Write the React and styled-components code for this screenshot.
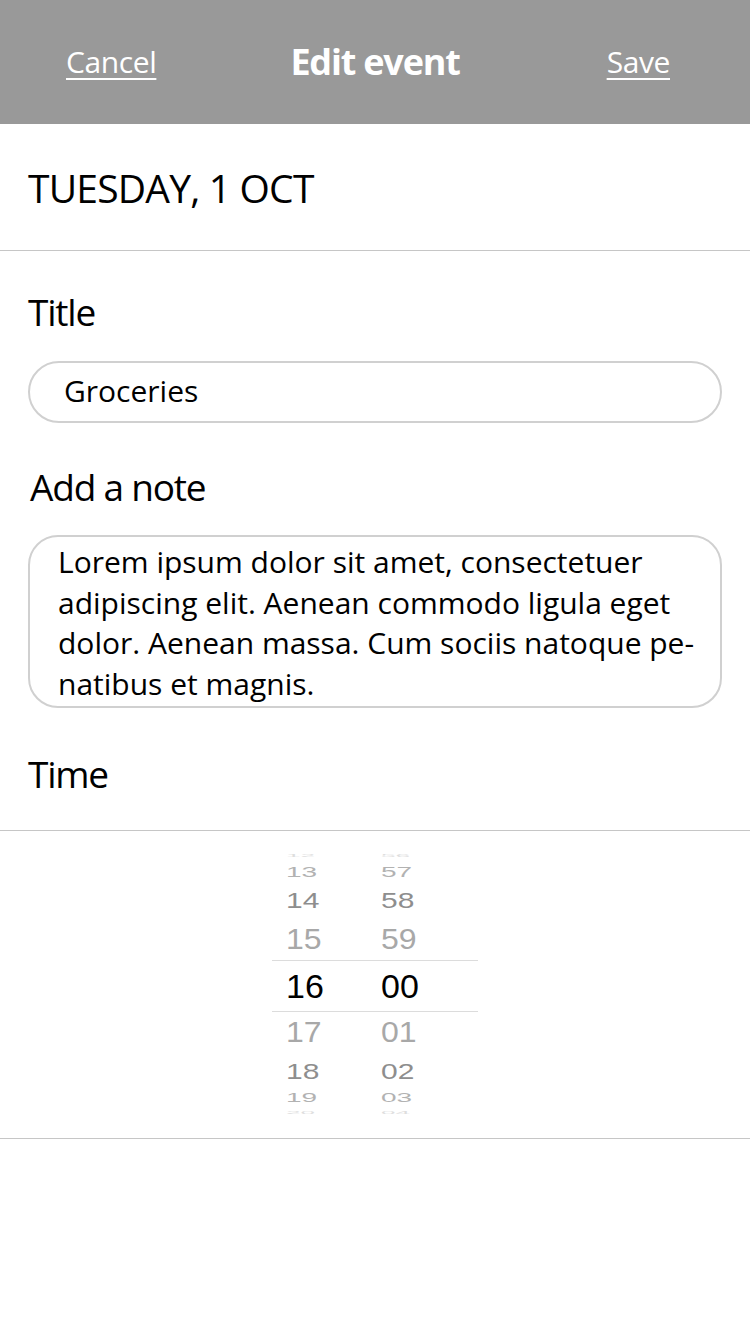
import React from 'react'
import styled, { createGlobalStyle } from 'styled-components'

const GlobalStyle = createGlobalStyle`
  body {
    margin: 0;
    background: #fff;
    font-family: "Open Sans", "Noto Sans", sans-serif;
    color: #000;
  }
`;

const Page = styled.div`
  width: 750px;
  min-height: 1334px;
  background: #fff;
`;

const Header = styled.header`
  height: 124px;
  background: #999999;
  display: grid;
  grid-template-columns: 1fr auto 1fr;
  align-items: center;
  color: #fff;
`;

const HeaderLink = styled.a`
  justify-self: ${p => (p.$end ? 'end' : 'start')};
  padding: ${p => (p.$end ? '0 80px 2px 0' : '0 0 2px 66px')};
  font-size: 30px;
  letter-spacing: -0.4px;
  text-decoration: underline;
  text-decoration-thickness: 2px;
  text-underline-offset: 5px;
  cursor: pointer;
`;

const HeaderTitle = styled.h1`
  margin: 0 0 2px;
  font-size: 36px;
  font-weight: 700;
  letter-spacing: -1.2px;
`;

const DateRow = styled.div`
  height: 127px;
  box-sizing: border-box;
  border-bottom: 1px solid #c6c6c6;
  display: flex;
  align-items: center;
  padding-left: 28px;
  font-size: 39px;
  letter-spacing: -0.8px;
`;

const Form = styled.div`
  display: flex;
  flex-direction: column;
  padding: 41px 28px 36px;
  border-bottom: 1px solid #c6c6c6;
`;

const Label = styled.div`
  font-size: 37px;
  line-height: 40px;
  letter-spacing: -1.2px;
  margin: ${p => p.$gap || 0}px 0 0 ${p => p.$indent || 0}px;
`;

const Input = styled.div`
  margin-top: 29px;
  height: 62px;
  box-sizing: border-box;
  border: 2px solid #d0d0d0;
  border-radius: 31px;
  display: flex;
  align-items: center;
  padding: 0 0 4px 34px;
  font-size: 30px;
`;

const Note = styled.div`
  margin-top: 28px;
  height: 173px;
  box-sizing: border-box;
  border: 2px solid #d0d0d0;
  border-radius: 30px;
  padding: 5px 20px 2px 28px;
  font-size: 30px;
  line-height: 40.5px;
  white-space: nowrap;
`;

const Picker = styled.div`
  padding: 19px 0 18px;
  border-bottom: 1px solid #c6c6c6;
  display: flex;
  justify-content: center;
`;

const Wheel = styled.div`
  width: 206px;
  display: flex;
  flex-direction: column;
  font-family: "Liberation Sans", Arial, sans-serif;
`;

const WheelRow = styled.div`
  height: ${p => p.$h}px;
  box-sizing: border-box;
  display: flex;
  align-items: center;
  padding-left: 14px;
  border-top: ${p => (p.$active ? '1px solid #dcdcdc' : 'none')};
  border-bottom: ${p => (p.$active ? '1px solid #dcdcdc' : 'none')};
`;

const Cell = styled.span`
  display: inline-block;
  width: ${p => (p.$first ? '95px' : 'auto')};
  font-size: ${p => p.$size}px;
  line-height: 1;
  color: ${p => p.$color};
  transform: scaleY(${p => p.$scale});
  transform-origin: center;
`;

const rows = [
  { h: '12', m: '56', height: 12, size: 26, scale: 0.15, color: '#dedede' },
  { h: '13', m: '57', height: 20, size: 28, scale: 0.5, color: '#b2b2b2' },
  { h: '14', m: '58', height: 36, size: 30, scale: 0.75, color: '#8e8e8e' },
  { h: '15', m: '59', height: 42, size: 32, scale: 0.92, color: '#a8a8a8' },
  { h: '16', m: '00', height: 52, size: 34, scale: 1, color: '#000', active: true },
  { h: '17', m: '01', height: 40, size: 32, scale: 0.92, color: '#a8a8a8' },
  { h: '18', m: '02', height: 38, size: 30, scale: 0.75, color: '#8e8e8e' },
  { h: '19', m: '03', height: 16, size: 28, scale: 0.45, color: '#b2b2b2' },
  { h: '20', m: '04', height: 14, size: 26, scale: 0.15, color: '#dedede' },
];

const App = () => {
  return (
    <Page>
      <GlobalStyle />
      <Header>
        <HeaderLink>Cancel</HeaderLink>
        <HeaderTitle>Edit event</HeaderTitle>
        <HeaderLink $end>Save</HeaderLink>
      </Header>
      <DateRow>TUESDAY, 1 OCT</DateRow>
      <Form>
        <Label>Title</Label>
        <Input>Groceries</Input>
        <Label $gap={44} $indent={2}>Add a note</Label>
        <Note>
          Lorem ipsum dolor sit amet, consectetuer<br />
          adipiscing elit. Aenean commodo ligula eget<br />
          dolor. Aenean massa. Cum sociis natoque pe-<br />
          natibus et magnis.
        </Note>
        <Label $gap={46}>Time</Label>
      </Form>
      <Picker>
        <Wheel>
          {rows.map(r => (
            <WheelRow key={r.h} $h={r.height} $active={r.active}>
              <Cell $first $size={r.size} $scale={r.scale} $color={r.color}>{r.h}</Cell>
              <Cell $size={r.size} $scale={r.scale} $color={r.color}>{r.m}</Cell>
            </WheelRow>
          ))}
        </Wheel>
      </Picker>
    </Page>
  );
}

export default App
